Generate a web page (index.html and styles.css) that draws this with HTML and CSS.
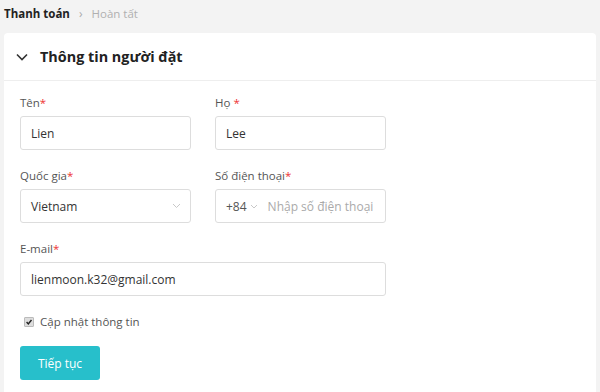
FILE: index.html
```html
<!DOCTYPE html>
<html lang="vi">
<head>
<meta charset="utf-8">
<link rel="stylesheet" href="styles.css">
</head>
<body>
<nav class="crumbs">
  <span class="crumb-active">Thanh toán</span>
  <span class="crumb-sep">›</span>
  <span class="crumb">Hoàn tất</span>
</nav>
<section class="card">
  <header class="card-head">
    <svg class="chev" width="12" height="8" viewBox="0 0 12 8"><path d="M1 1.5 L6 6.5 L11 1.5" fill="none" stroke="#333" stroke-width="1.6"/></svg>
    <h2 class="title">Thông tin người đặt</h2>
  </header>
  <form class="form">
    <div class="row">
      <div class="field">
        <label class="label">Tên<span class="req">*</span></label>
        <div class="input">Lien</div>
      </div>
      <div class="field">
        <label class="label">Họ <span class="req">*</span></label>
        <div class="input">Lee</div>
      </div>
    </div>
    <div class="row">
      <div class="field">
        <label class="label">Quốc gia<span class="req">*</span></label>
        <div class="input select">Vietnam
          <svg width="9" height="6" viewBox="0 0 9 6"><path d="M1 1 L4.5 4.5 L8 1" fill="none" stroke="#c8c8c8" stroke-width="1"/></svg>
        </div>
      </div>
      <div class="field">
        <label class="label">Số điện thoại<span class="req">*</span></label>
        <div class="input phone"><span class="code">+84</span>
          <svg width="8" height="5" viewBox="0 0 8 5"><path d="M1 1 L4 4 L7 1" fill="none" stroke="#c8c8c8" stroke-width="1"/></svg>
          <span class="ph">Nhập số điện thoại</span></div>
      </div>
    </div>
    <div class="row">
      <div class="field wide">
        <label class="label">E-mail<span class="req">*</span></label>
        <div class="input">lienmoon.k32@gmail.com</div>
      </div>
    </div>
    <label class="check"><span class="box"><svg width="9" height="9" viewBox="0 0 9 9"><path d="M1.8 4.6 L3.7 6.6 L7.3 2.2" fill="none" stroke="#222" stroke-width="1.6"/></svg></span> Cập nhật thông tin</label>
    <button type="button" class="btn">Tiếp tục</button>
  </form>
</section>
</body>
</html>
```
FILE: styles.css
```css
* { box-sizing: border-box; }
body {
  margin: 0;
  background: #f3f3f3;
  font-family: "Open Sans", "Noto Sans", sans-serif;
  color: #333;
  height: 392px;
  overflow: hidden;
  display: flex;
  flex-direction: column;
}
.crumbs {
  height: 26px;
  padding: 0 0 0 4px;
  font-size: 11.5px;
  display: flex;
  gap: 9px;
  align-items: center;
}
.crumb-active { font-weight: 700; color: #222; }
.crumb-sep { color: #aaa; font-size: 12px; }
.crumb { color: #b0b0b0; }
.card {
  flex: 1;
  margin: 7px 4px 0 4px;
  background: #fff;
  border-radius: 4px 4px 0 0;
}
.card-head {
  height: 48px;
  display: flex;
  align-items: center;
  padding-left: 12px;
  border-bottom: 1px solid #eee;
}
.chev { margin-right: 12px; }
.title {
  margin: 0;
  font-size: 14.4px;
  font-weight: 700;
  color: #222;
}
.form { padding: 14px 16px 0 16px; }
.row { display: flex; gap: 24px; margin-bottom: 18px; }
.field { width: 171px; }
.field.wide { width: 366px; }
.label { display: block; font-size: 11.5px; color: #555; height: 16px; line-height: 16px; margin-bottom: 5px; }
.req { color: #e33; }
.input {
  height: 34px;
  border: 1px solid #ddd;
  border-radius: 3px;
  padding: 0 10px;
  font-size: 12px;
  color: #333;
  display: flex;
  align-items: center;
}
.select { justify-content: space-between; padding-right: 9px; }
.phone { gap: 3px; padding-right: 0; white-space: nowrap; overflow: hidden; }
.code { color: #555; }
.ph { color: #aaa; margin-left: 7px; }
.check {
  display: flex; align-items: center; gap: 6px;
  font-size: 11.5px; color: #555; margin: 16px 0 0 4px;
}
.box {
  width: 10px; height: 10px;
  background: #ddd;
  border: 1px solid #bbb;
  border-radius: 1px;
  display: flex; align-items: center; justify-content: center;
}
.box svg { width: 8px; height: 8px; }
.btn {
  margin-top: 17px;
  width: 80px; height: 34px;
  background: #27bfcb;
  border: 0; border-radius: 3px;
  color: #fff; font-family: inherit; font-size: 12px;
}
```
